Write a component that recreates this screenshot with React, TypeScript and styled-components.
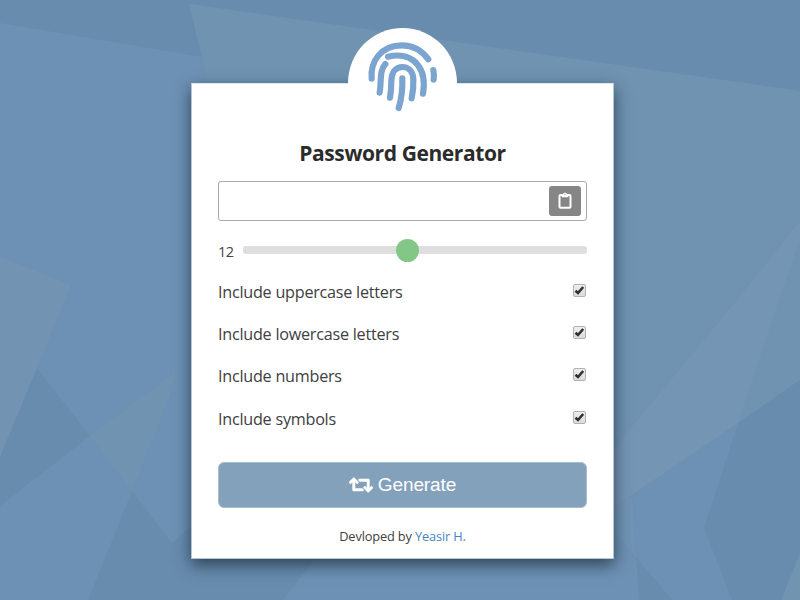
import React, { useState } from "react";
import styled, { createGlobalStyle } from "styled-components";
import { FaRetweet } from "react-icons/fa";

const GlobalStyle = createGlobalStyle`
  * { box-sizing: border-box; }
  body { margin: 0; overflow: hidden; font-family: "Open Sans", "Noto Sans", sans-serif; }
`;

const Page = styled.main`
  position: relative;
  width: 800px;
  height: 600px;
  padding: 83px 186px 41px 191px;
  background: #6d91b4;
  overflow: hidden;
`;

const Backdrop = styled.svg`
  position: absolute;
  inset: 0;
`;

const Card = styled.section`
  position: relative;
  display: flex;
  flex-direction: column;
  width: 423px;
  height: 476px;
  padding: 56px 26px 0;
  background: #fff;
  border: 1px solid #b4c5d3;
  border-top-color: #dce7ef;
  box-shadow: 0 6px 15px rgba(20, 35, 50, 0.7);
`;

const Badge = styled.div`
  position: absolute;
  top: -56px;
  left: 156px;
  width: 109px;
  height: 110px;
  border-radius: 50%;
  background: #fff;
`;

const Print = styled.svg`
  position: absolute;
  left: -8px;
  top: -8px;
`;

const Title = styled.h1`
  margin: 0;
  height: 26px;
  line-height: 27px;
  text-align: center;
  font-size: 21px;
  font-weight: 700;
  letter-spacing: -0.4px;
  color: #2b2b2b;
  white-space: nowrap;
`;

const Field = styled.div`
  display: flex;
  justify-content: flex-end;
  align-items: flex-start;
  height: 40px;
  margin-top: 15px;
  padding: 4px 5px 0 0;
  border: 1px solid #aaa;
  border-radius: 3px;
`;

const CopyButton = styled.button`
  display: flex;
  align-items: center;
  justify-content: center;
  width: 32px;
  height: 30px;
  padding: 0 0 2px;
  border: 0;
  border-radius: 3px;
  background: #868686;
  color: #fff;
`;

const SliderRow = styled.div`
  display: flex;
  align-items: center;
  height: 24px;
  margin-top: 17px;
`;

const Length = styled.span`
  width: 25px;
  padding-top: 3px;
  font-size: 14.5px;
  letter-spacing: -0.6px;
  line-height: 18px;
  color: #444;
`;

const Track = styled.div`
  display: flex;
  align-items: center;
  flex: 1;
  height: 8px;
  padding-left: 153px;
  border-radius: 3px;
  background: #dedede;
`;

const Thumb = styled.div`
  width: 23px;
  height: 23px;
  border-radius: 50%;
  background: #82c785;
`;

const Options = styled.div`
  display: flex;
  flex-direction: column;
  margin-top: 10px;
`;

const Option = styled.label`
  display: flex;
  justify-content: space-between;
  height: 42.2px;
  padding-right: 1px;
  font-size: 16.2px;
  letter-spacing: -0.25px;
  line-height: 41px;
  color: #404040;
`;

const Box = styled.span`
  display: flex;
  align-items: center;
  justify-content: center;
  width: 13px;
  height: 13px;
  margin-top: 12px;
  border: 1px solid #b1b1b1;
  border-radius: 2px;
  background: linear-gradient(#eee, #dcdcdc);
`;

const GenerateButton = styled.button`
  display: flex;
  align-items: center;
  justify-content: center;
  gap: 5px;
  height: 46px;
  margin-top: 21px;
  padding: 0;
  border: 1px solid #a5bdd1;
  border-radius: 6px;
  background: #84a1bc;
  color: #fff;
  font: 19px "Liberation Sans", sans-serif;
  letter-spacing: -0.1px;
  svg { font-size: 24px; stroke: currentColor; stroke-width: 14px; }
`;

const Credit = styled.footer`
  margin-top: 18px;
  text-align: center;
  font-size: 12.8px;
  letter-spacing: -0.15px;
  line-height: 20px;
  color: #404040;
  white-space: nowrap;
`;

const Author = styled.a`
  color: #4485c4;
  text-decoration: none;
`;

const options = [
  "Include uppercase letters",
  "Include lowercase letters",
  "Include numbers",
  "Include symbols",
];

const facets: [string, string][] = [
  ["0,0 800,0 800,91 189,4 202,57 0,23", "#688cae"],
  ["189,4 800,91 800,380 614,507 400,300 209,85", "#7093b1"],
  ["0,257 71,285 0,457", "#7294b2"],
  ["37,368 90,436 0,506 0,457", "#688cad"],
  ["90,436 181,368 132,491", "#7093b1"],
  ["132,491 172,543 190,527 340,527 283,600 88,600", "#688cae"],
  ["800,221 737,300 625,435 614,450 614,507 738,423 779,300 800,240", "#7495b4"],
  ["800,380 738,423 704,528 732,600 800,600", "#688cae"],
  ["800,553 800,600 781,600", "#7194b1"],
  ["614,507 632,496 636,557 614,532", "#7194b4"],
  ["636,557 672,600 639,600", "#688cae"],
];

export default function App() {
  const [checked, setChecked] = useState([true, true, true, true]);
  const toggle = (index: number) =>
    setChecked(checked.map((value, i) => (i === index ? !value : value)));

  return (
    <Page>
      <GlobalStyle />
      <Backdrop width="800" height="600" viewBox="0 0 800 600">
        {facets.map(([points, fill]) => (
          <polygon key={points} points={points} fill={fill} />
        ))}
      </Backdrop>
      <Card>
        <Badge>
          <Print
            width="125" height="100" viewBox="0 0 375 300" fill="none"
            stroke="#7ba5d0" strokeWidth="18.5" strokeLinecap="round"
          >
            <path d="M95 176C90 125 123 76 186 76C218 76 246 92 265 118" />
            <path d="M144 110C180 101 213 110 233 134C251 156 255 185 249 221" />
            <path d="M136 132C118 153 125 177 119 218" />
            <path d="M150 233C153 215 154 200 154 182C155 156 167 141 187 141C208 141 220 158 220 180C221 200 219 215 215 235" />
            <path d="M187 175C188 205 185 235 176 264" />
            <path d="M280 150Q283 165 281 179" />
          </Print>
        </Badge>
        <Title>Password Generator</Title>
        <Field>
          <CopyButton aria-label="Copy password">
            <svg width="14" height="17" viewBox="0 0 14 17" fill="none" stroke="currentColor">
              <rect x="1.5" y="3" width="11" height="12.8" rx="1" strokeWidth="2" />
              <path d="M3.7 2.2H5C5.2 .3 8.8 .3 9 2.2H10.3V5.2H3.7Z" fill="currentColor" stroke="none" />
              <circle cx="7" cy="2.3" r=".6" fill="#868686" stroke="none" />
            </svg>
          </CopyButton>
        </Field>
        <SliderRow>
          <Length>12</Length>
          <Track><Thumb /></Track>
        </SliderRow>
        <Options>
          {options.map((label, i) => (
            <Option key={label} onClick={() => toggle(i)}>
              <span>{label}</span>
              <Box>
                {checked[i] && (
                  <svg width="11" height="11" viewBox="0 0 11 11" fill="none" stroke="#303030" strokeWidth="2.6">
                    <path d="M1.5 5.8L4 8L9.2 2" />
                  </svg>
                )}
              </Box>
            </Option>
          ))}
        </Options>
        <GenerateButton><FaRetweet />Generate</GenerateButton>
        <Credit>Devloped by <Author>Yeasir H.</Author></Credit>
      </Card>
    </Page>
  );
}
